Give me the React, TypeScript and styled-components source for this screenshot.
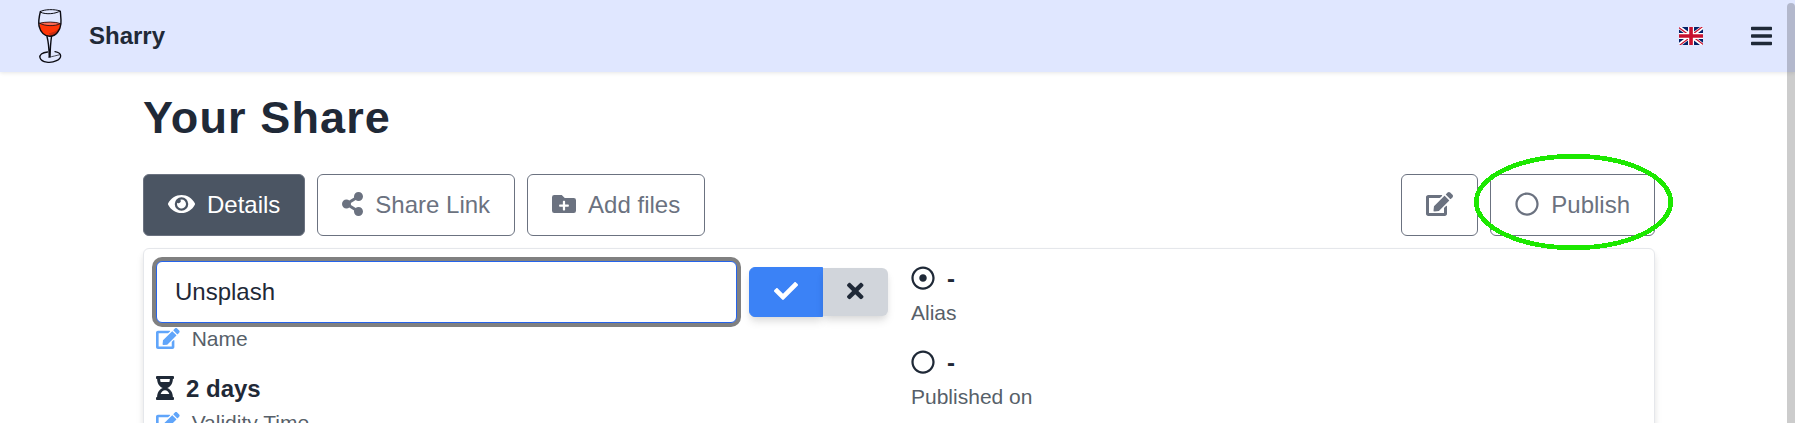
import React from "react";
import styled, { createGlobalStyle, css } from "styled-components";
import type { IconType } from "react-icons";
import {
  FaBars,
  FaCheck,
  FaEdit,
  FaEye,
  FaFolderPlus,
  FaHourglassHalf,
  FaRegCircle,
  FaRegDotCircle,
  FaShareAlt,
  FaTimes,
} from "react-icons/fa";

const GlobalStyle = createGlobalStyle`
  *, *::before, *::after { box-sizing: border-box; }
  body {
    margin: 0;
    background: #fff;
    color: #1f2937;
    font-family: "Liberation Sans", Arial, sans-serif;
    font-size: 24px;
    line-height: 36px;
  }
`;

/* Each glyph keeps the natural advance width of its view box. */
const glyph = (icon: IconType, width: number) => styled(icon)`
  display: inline-block;
  width: ${width}em;
  height: 1em;
  vertical-align: -0.125em;
`;

const BarsIcon = glyph(FaBars, 0.875);
const CheckIcon = glyph(FaCheck, 1);
const EditIcon = glyph(FaEdit, 1.125);
const EyeIcon = glyph(FaEye, 1.125);
const FolderIcon = glyph(FaFolderPlus, 1);
const HourglassIcon = glyph(FaHourglassHalf, 0.75);
const CircleIcon = glyph(FaRegCircle, 1);
const DotCircleIcon = glyph(FaRegDotCircle, 1);
const ShareIcon = glyph(FaShareAlt, 0.875);
const CrossIcon = glyph(FaTimes, 0.6875);

const Page = styled.div`
  position: relative;
  height: 100vh;
  overflow: hidden;
`;

const TopBar = styled.nav`
  display: flex;
  align-items: center;
  height: 72px;
  padding: 0 23px 0 36px;
  background: #e0e7ff;
  box-shadow: 0 1px 4px rgba(0, 0, 0, 0.1);
`;

const Brand = styled.a`
  display: flex;
  align-items: center;
  gap: 25px;
  flex: 1;
  font-weight: 700;
`;

const LogoArt = styled.svg`
  width: 28px;
  height: 56px;
`;

const TopActions = styled.div`
  display: flex;
  align-items: center;
  gap: 48px;
`;

const MenuToggle = styled.a`
  padding-top: 2px;
`;

const FlagArt = styled.svg`
  display: block;
  width: 24px;
  height: 18px;
`;

const Content = styled.main`
  width: 1512px;
  margin: 0 0 0 143px;
  padding-top: 19px;
`;

const Title = styled.h1`
  margin: 0 0 29px;
  font-size: 45px;
  line-height: 54px;
  font-weight: 700;
  letter-spacing: 0.025em;
`;

const Toolbar = styled.div`
  display: flex;
  justify-content: space-between;
  margin-bottom: 12px;
`;

const ButtonGroup = styled.div`
  display: flex;
  gap: 12px;
`;

const ToolButton = styled.button<{ $active?: boolean }>`
  height: 62px;
  padding: 12px 24px;
  border: 1px solid #6b7280;
  border-radius: 6px;
  background: ${(p) => (p.$active ? "#4b5563" : "#fff")};
  color: ${(p) => (p.$active ? "#fff" : "#6b7280")};
  font: inherit;
  white-space: nowrap;
`;

const ButtonText = styled.span`
  margin-left: 12px;
`;

const Card = styled.section`
  display: grid;
  grid-template-columns: 743px 1fr;
  column-gap: 12px;
  height: 420px;
  padding: 12px;
  border: 1px solid #e5e7eb;
  border-radius: 6px;
  box-shadow: 0 6px 9px -1px rgba(0, 0, 0, 0.1), 0 3px 6px -1px rgba(0, 0, 0, 0.06);
`;

const Column = styled.div`
  display: flex;
  flex-direction: column;
  gap: 18px;
`;

const EditRow = styled.div`
  display: flex;
  align-items: center;
  height: 62px;
`;

const NameInput = styled.input`
  width: 581px;
  height: 62px;
  margin-right: 12px;
  padding: 12px 18px;
  border: 1px solid #2563eb;
  border-radius: 6px;
  outline: none;
  box-shadow: 0 0 0 4px #808080;
  background: #fff;
  color: #1f2937;
  font: inherit;
`;

const primary = css`
  height: 50px;
  border: 1px solid #3b82f6;
  border-radius: 6px 0 0 6px;
  background: #3b82f6;
  color: #fff;
`;

const secondary = css`
  height: 48px;
  border: 0;
  border-radius: 0 6px 6px 0;
  background: #d1d5db;
  color: #1f2937;
`;

const InlineButton = styled.button<{ $primary?: boolean }>`
  padding: 6px 24px;
  font: inherit;
  box-shadow: 0 6px 9px -1px rgba(0, 0, 0, 0.1), 0 3px 6px -1px rgba(0, 0, 0, 0.06);
  ${(p) => (p.$primary ? primary : secondary)}
`;

const Value = styled.div`
  height: 36px;
  font-weight: 700;
`;

const ValueText = styled.span`
  margin-left: 12px;
`;

const Label = styled.div`
  height: 30px;
  padding-top: 1px;
  font-size: 21px;
  line-height: 30px;
  color: #575f69;
`;

const EditLink = styled.a`
  margin-right: 12px;
  color: #60a5fa;
`;

const ScrollThumb = styled.div`
  position: absolute;
  top: 3px;
  right: 0;
  width: 8px;
  height: 440px;
  border-radius: 4px;
  background: rgba(0, 0, 0, 0.2);
`;

const Highlight = styled.svg`
  position: absolute;
  top: 152px;
  left: 1472px;
  width: 204px;
  height: 100px;
  pointer-events: none;
`;

function Logo() {
  return (
    <LogoArt viewBox="0 0 28 56" fill="none" stroke="#0b0b12" strokeLinecap="round">
      <path d="M3.2 15.5C8 13.5 19 13.6 25 15.6C25 20 22.5 25 18.5 27.4C14.5 29.2 10 28.5 7 25.5C4.2 22.5 3 19.5 3.2 15.5Z" fill="#ff3608" stroke="none" />
      <path d="M3.6 15.2C10 13.6 19 13.6 24.5 15.6C19 18.4 9 18.4 3.6 15.2Z" fill="#ff6a52" strokeWidth=".8" />
      <path d="M13 25C17 25 21 22.5 23.5 20C22 24 18.5 27.3 14 27.8Z" fill="#c92c10" stroke="none" />
      <path d="M4.5 3.5C8 1.2 19 1 24 3C20 5.7 10 7 4.5 4.2" strokeWidth="1" />
      <path d="M4.4 3.5C3.3 8 2.3 14 3 18C4.5 24 8.5 28.4 14 28.3C20 28.2 24.2 22.5 24.9 16C25.3 11.5 24.6 7 24.3 3.2" strokeWidth="1.4" />
      <path d="M11 28.5C12.2 33 13 39 13.3 48.8M15.5 28.5C14.6 35 14.2 42 14 49" strokeWidth="1.4" />
      <path d="M12.5 49.2C17 48.6 20 47.5 23.5 46.8" strokeWidth=".7" />
      <path d="M11.5 44C6 44.5 3.2 47 4 49.8C5.5 54.9 15 55.5 20.5 52.7C26 50 26.6 45 19 43.7" strokeWidth="1.3" />
    </LogoArt>
  );
}

function Flag() {
  return (
    <FlagArt viewBox="0 0 640 480">
      <path fill="#012169" d="M0 0h640v480H0z" />
      <path fill="#FFF" d="m75 0 244 181L562 0h78v62L400 241l240 178v61h-80L320 301 81 480H0v-60l239-178L0 64V0h75z" />
      <path fill="#C8102E" d="m424 281 216 159v40L369 281h55zm-184 20 6 35L54 480H0l240-179zM640 0v3L391 191l2-44L590 0h50zM0 0l239 176h-60L0 42V0z" />
      <path fill="#FFF" d="M241 0v480h160V0H241zM0 160v160h640V160H0z" />
      <path fill="#C8102E" d="M0 193v96h640v-96H0zM273 0v480h96V0h-96z" />
    </FlagArt>
  );
}

export default function App() {
  return (
    <Page>
      <GlobalStyle />
      <TopBar>
        <Brand>
          <Logo />
          Sharry
        </Brand>
        <TopActions>
          <Flag />
          <MenuToggle>
            <BarsIcon />
          </MenuToggle>
        </TopActions>
      </TopBar>
      <Content>
        <Title>Your Share</Title>
        <Toolbar>
          <ButtonGroup>
            <ToolButton $active>
              <EyeIcon />
              <ButtonText>Details</ButtonText>
            </ToolButton>
            <ToolButton>
              <ShareIcon />
              <ButtonText>Share Link</ButtonText>
            </ToolButton>
            <ToolButton>
              <FolderIcon />
              <ButtonText>Add files</ButtonText>
            </ToolButton>
          </ButtonGroup>
          <ButtonGroup>
            <ToolButton aria-label="Edit">
              <EditIcon />
            </ToolButton>
            <ToolButton>
              <CircleIcon />
              <ButtonText>Publish</ButtonText>
            </ToolButton>
          </ButtonGroup>
        </Toolbar>
        <Card>
          <Column>
            <div>
              <EditRow>
                <NameInput defaultValue="Unsplash" />
                <InlineButton $primary aria-label="Save">
                  <CheckIcon />
                </InlineButton>
                <InlineButton aria-label="Cancel">
                  <CrossIcon />
                </InlineButton>
              </EditRow>
              <Label>
                <EditLink>
                  <EditIcon />
                </EditLink>
                Name
              </Label>
            </div>
            <div>
              <Value>
                <HourglassIcon />
                <ValueText>2 days</ValueText>
              </Value>
              <Label>
                <EditLink>
                  <EditIcon />
                </EditLink>
                Validity Time
              </Label>
            </div>
          </Column>
          <Column>
            <div>
              <Value>
                <DotCircleIcon />
                <ValueText>-</ValueText>
              </Value>
              <Label>Alias</Label>
            </div>
            <div>
              <Value>
                <CircleIcon />
                <ValueText>-</ValueText>
              </Value>
              <Label>Published on</Label>
            </div>
          </Column>
        </Card>
      </Content>
      <Highlight viewBox="0 0 204 100">
        <ellipse
          cx="101.5"
          cy="50"
          rx="97.3"
          ry="45.8"
          fill="none"
          stroke="#1ce800"
          strokeWidth="4.7"
          shapeRendering="crispEdges"
        />
      </Highlight>
      <ScrollThumb />
    </Page>
  );
}
